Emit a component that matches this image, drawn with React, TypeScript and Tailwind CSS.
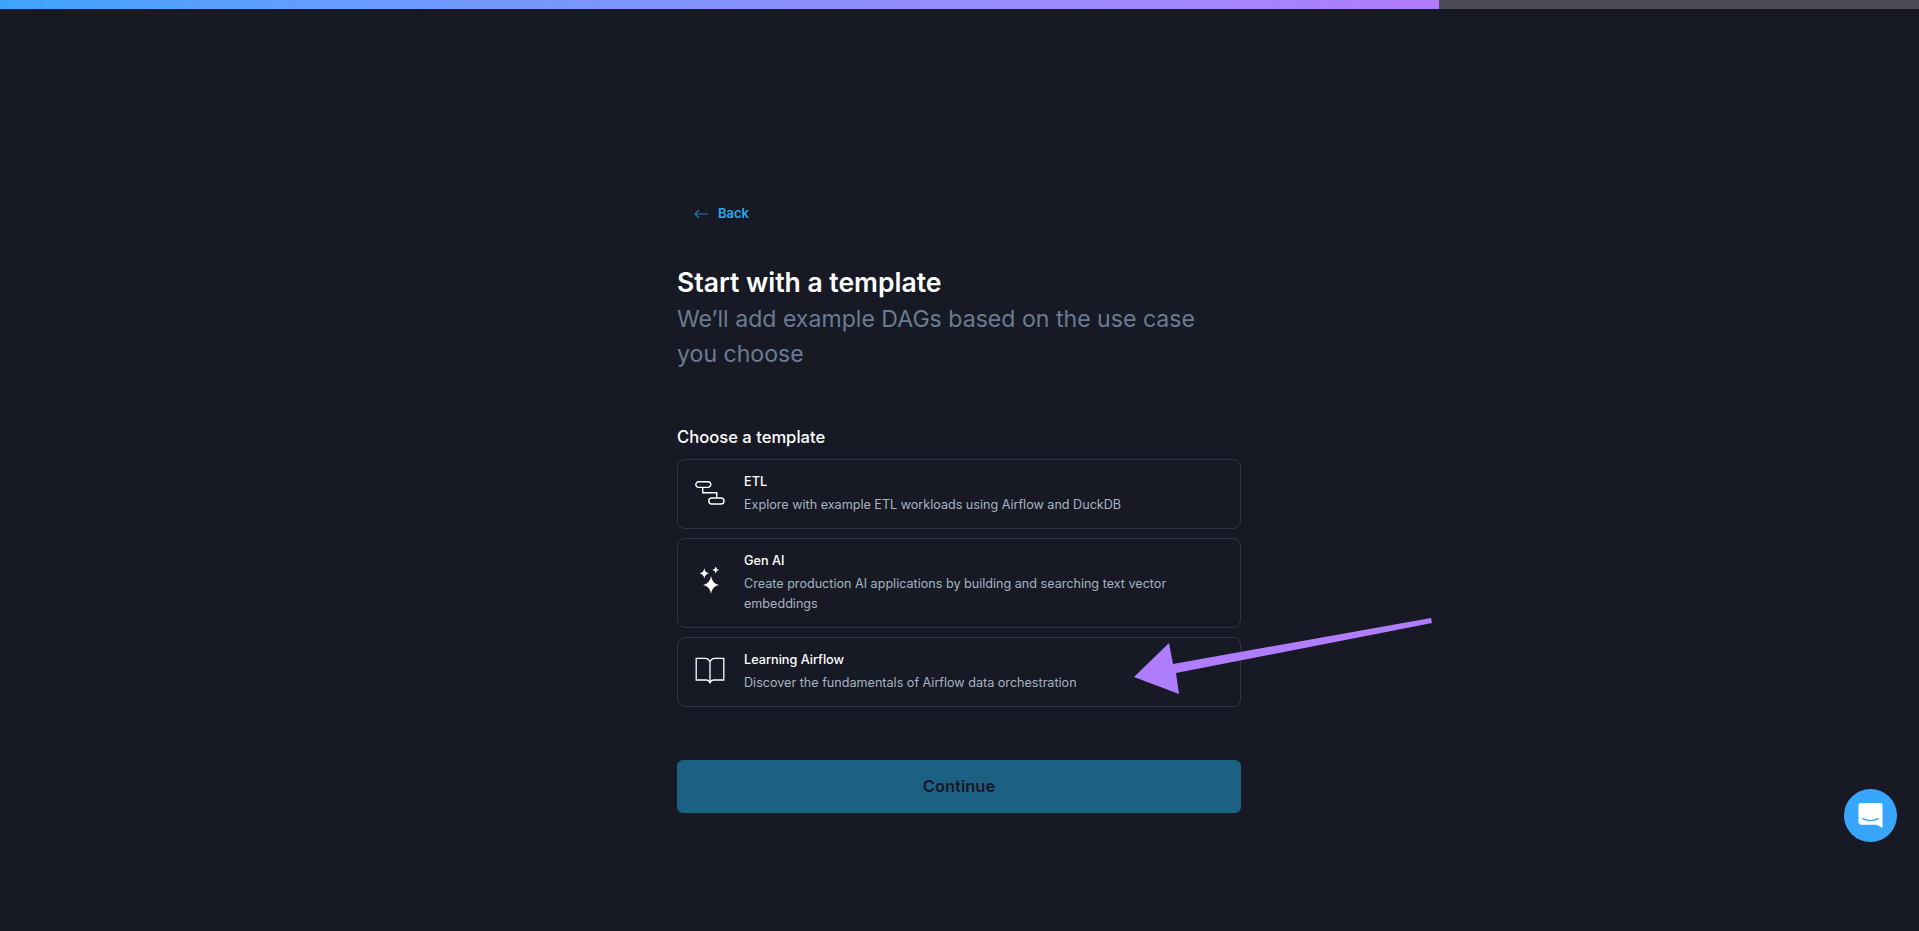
const font = { fontFamily: "Inter, sans-serif" };

function EtlIcon() {
  return (
    <svg viewBox="0 0 32 24" fill="none" stroke="white" strokeWidth="1.4" className="h-6 w-8">
      <rect x="0.8" y="0.8" width="15" height="5.6" rx="2.8" />
      <rect x="13.8" y="17" width="15.2" height="6" rx="3" />
      <path d="M7.7 6.4v5.3h14V17" />
    </svg>
  );
}

function SparkIcon() {
  return (
    <svg viewBox="0 0 32 32" fill="white" className="h-8 w-8">
      <path d="M16 10Q17.2 17.8 24 19 17.2 20.2 16 28 14.8 20.2 8 19 14.8 17.8 16 10Z" />
      <path d="M9.3 2.2Q10 6.6 14.3 7.3 10 8 9.3 12.4 8.6 8 4.3 7.3 8.6 6.6 9.3 2.2Z" />
      <path d="M20.7 .6Q21.2 3.5 24 4 21.2 4.5 20.7 7.4 20.2 4.5 17.4 4 20.2 3.5 20.7 .6Z" />
    </svg>
  );
}

function BookIcon() {
  return (
    <svg viewBox="0 0 32 32" fill="none" stroke="white" strokeWidth="1.3" className="h-8 w-8">
      <path d="M15 6.8C14 4.5 12.5 3.4 10.5 3.4H1.2V25H11.5C13 25 14 25.8 15 27.8 16 25.8 17 25 18.5 25H28.8V3.4H19.5C17.5 3.4 16 4.5 15 6.8V27.8" />
    </svg>
  );
}

function TemplateCard({
  icon,
  title,
  children,
}: {
  icon: React.ReactNode;
  title: string;
  children: React.ReactNode;
}) {
  return (
    <div className="flex items-center rounded-lg border border-[#2d3546] pl-[17px] pr-4 pt-[12px] pb-[13.5px]">
      <div className="flex w-8 shrink-0 justify-center">{icon}</div>
      <div className="ml-[17px]">
        <div className="text-[12.7px] leading-[20px] font-medium text-white">{title}</div>
        <p className="mt-[3px] text-[12.6px] leading-[19.5px] text-[#a8b2c1]">{children}</p>
      </div>
    </div>
  );
}

export default function App() {
  return (
    <div className="relative h-[931px] overflow-hidden bg-[#171a24]" style={font}>
      <div className="h-[9px] bg-[#4b4c57]">
        <div className="h-full w-[1439px] bg-gradient-to-r from-[#3ba4ff] to-[#b07dff]" />
      </div>

      <main className="ml-[677px] w-[564px] pt-[196px]">
        <button className="ml-[17px] flex h-[18px] items-center gap-[10px] text-[13px] font-semibold text-[#2ba8ee]">
          <svg viewBox="0 0 14 10" fill="none" stroke="#1d7aab" strokeWidth="1.2" className="h-[10px] w-[14px]">
            <path d="M14 5H1M5 1 1 5l4 4" />
          </svg>
          Back
        </button>

        <h1 className="mt-[41px] text-[26.5px] leading-[36px] font-semibold text-white">Start with a template</h1>
        <p className="mt-[2px] w-[540px] text-[23.1px] leading-[35px] text-[#6b7b93]">
          We’ll add example DAGs based on the use case you choose
        </p>

        <h2 className="mt-[53px] text-[16.6px] leading-[24px] font-medium text-white">Choose a template</h2>

        <div className="mt-[10px] flex flex-col gap-[9px]">
          <TemplateCard icon={<EtlIcon />} title="ETL">
            Explore with example ETL workloads using Airflow and DuckDB
          </TemplateCard>
          <TemplateCard icon={<SparkIcon />} title="Gen AI">
            Create production AI applications by building and searching text vector embeddings
          </TemplateCard>
          <TemplateCard icon={<BookIcon />} title="Learning Airflow">
            Discover the fundamentals of Airflow data orchestration
          </TemplateCard>
        </div>

        <button className="mt-[53px] h-[53px] w-full rounded-md bg-[#1c6084] text-[16.5px] font-semibold text-[#161a23]">
          Continue
        </button>
      </main>

      {/* annotation arrow drawn over the page */}
      <svg className="absolute top-0 left-0 h-[931px] w-[1919px]" viewBox="0 0 1919 931" fill="none">
        <path
          d="M1134 677 1169 643 1173 664 1431 618 1432 623 1176 673 1179 694Z"
          fill="#b07dff"
        />
      </svg>

      <div className="absolute top-[789px] left-[1844px] flex h-[53px] w-[53px] items-center justify-center rounded-full bg-[#38a6ff]">
        <svg viewBox="0 0 26 28" className="h-[27px] w-[25px]">
          <path
            d="M3 1h20a2.5 2.5 0 0 1 2.5 2.5V27l-6-3.5H3A2.5 2.5 0 0 1 .5 21V3.5A2.5 2.5 0 0 1 3 1z"
            fill="white"
          />
          <path d="M4.5 17c5 3 12 3 17 0" fill="none" stroke="#38a6ff" strokeWidth="1.3" />
        </svg>
      </div>
    </div>
  );
}
